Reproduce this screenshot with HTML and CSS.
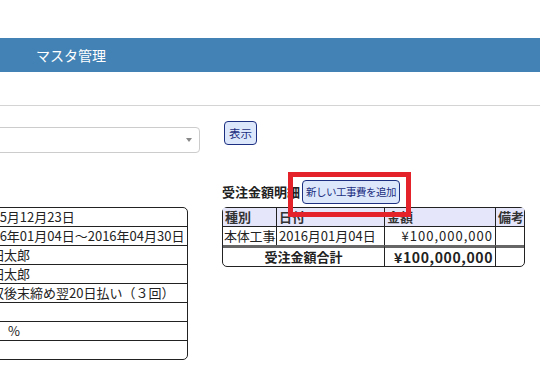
FILE: index.html
```html
<!DOCTYPE html>
<html lang="ja">
<head>
  <meta charset="UTF-8">
  <meta name="viewport" content="width=device-width, initial-scale=1.0">
  <title>マスタ管理</title>
  <link rel="stylesheet" href="styles.css">
</head>
<body>
  <header class="title-bar">マスタ管理</header>
  <div class="rule"></div>

  <main class="page">
    <div class="search-row">
      <div class="select"><span class="select-arrow"></span></div>
      <button class="btn">表示</button>
    </div>

    <div class="detail-row">
      <section class="left-col">
        <h3 class="section-title">契約情報</h3>
        <table class="info">
          <tr><th>契約日</th><td>2015月12月23日</td></tr>
          <tr><th>工期</th><td>2016年01月04日～2016年04月30日</td></tr>
          <tr><th>営業担当</th><td>山田太郎</td></tr>
          <tr><th>工事担当</th><td>山田太郎</td></tr>
          <tr><th>支払条件</th><td>検収後末締め翌20日払い（３回）</td></tr>
          <tr><th>備考</th><td></td></tr>
          <tr><th>利益率</th><td><span class="pct-val"></span>%</td></tr>
          <tr><th>状態</th><td></td></tr>
        </table>
      </section>

      <section class="right-col">
        <div class="right-head">
          <h3 class="section-title">受注金額明細</h3>
          <button class="btn btn-add">新しい工事費を追加</button>
          <div class="highlight"></div>
        </div>
        <table class="amounts">
          <tr>
            <th class="c-kind">種別</th>
            <th class="c-date">日付</th>
            <th class="c-amount">金額</th>
            <th class="c-note">備考</th>
          </tr>
          <tr>
            <td class="kind">本体工事</td>
            <td>2016月01月04日</td>
            <td class="money">¥100,000,000</td>
            <td></td>
          </tr>
          <tr class="total">
            <td colspan="2" class="total-label">受注金額合計</td>
            <td class="money">¥100,000,000</td>
            <td></td>
          </tr>
        </table>
      </section>
    </div>
  </main>
</body>
</html>
```

FILE: styles.css
```css
body {
  margin: 0;
  font-family: "Noto Sans CJK JP", sans-serif;
  font-size: 13px;
  color: #222;
  overflow: hidden;
}
.title-bar {
  margin-top: 38px;
  height: 34px;
  line-height: 34px;
  padding-left: 36px;
  background: #4382b4;
  color: #fff;
  font-size: 14px;
}
.rule {
  margin-top: 33px;
  border-top: 1px solid #d4d4d4;
}
.page {
  margin-left: -170px;
  padding-top: 15px;
}
.search-row {
  display: flex;
  align-items: flex-start;
  gap: 24px;
}
.select {
  width: 370px;
  height: 26px;
  margin-top: 6px;
  box-sizing: border-box;
  border: 1px solid #ccc;
  border-radius: 4px;
  display: flex;
  align-items: center;
  justify-content: flex-end;
  padding-right: 7px;
}
.select-arrow {
  width: 0;
  height: 0;
  border-left: 3px solid transparent;
  border-right: 3px solid transparent;
  border-top: 4px solid #888;
}
.btn {
  height: 24px;
  padding: 0 4px;
  font-family: "Noto Sans CJK JP", sans-serif;
  font-size: 11.5px;
  line-height: 22px;
  color: #1c2f80;
  background: #dde7fc;
  border: 1px solid #1c2f80;
  border-radius: 4px;
}
.btn-add {
  width: 98px;
  padding: 0 3px;
  font-size: 10.5px;
  letter-spacing: -0.5px;
}
.detail-row {
  display: flex;
  align-items: flex-start;
  gap: 22px;
  margin-top: 27px;
}
.left-col {
  width: 370px;
}
.section-title {
  margin: 0 0 3px;
  font-size: 13px;
  font-weight: bold;
  line-height: 24px;
}
.right-head {
  position: relative;
  display: flex;
  align-items: center;
  gap: 2px;
  height: 24px;
  margin-bottom: 3px;
}
.right-head .section-title {
  margin: 0;
}
.highlight {
  position: absolute;
  left: 66px;
  top: -8px;
  width: 123px;
  height: 45px;
  box-sizing: border-box;
  border: 5px solid #e3222a;
}

table {
  border-collapse: separate;
  border-spacing: 0;
  border: 1px solid #222;
  border-radius: 5px;
}
th, td {
  height: 18px;
  padding: 0 2px;
  line-height: 18px;
  white-space: nowrap;
  text-align: left;
}
tr + tr th, tr + tr td {
  border-top: 1px solid #222;
}
th + th, th + td, td + td {
  border-left: 1px solid #222;
}

.info {
  width: 358px;
}
.info th {
  width: 140px;
  background: #e6e6fa;
}
.pct-val {
  display: inline-block;
  width: 30px;
}

.amounts {
  width: 303px;
  table-layout: fixed;
}
.amounts th {
  background: #e6e6fa;
  color: #333;
}
.amounts .kind {
  padding: 0 0 0 1px;
  letter-spacing: -0.2px;
}
.c-kind { width: 49px; }
.c-date { width: 103px; }
.c-amount { width: 106px; }
.c-note { width: 24px; }
.money {
  text-align: right;
  letter-spacing: 1px;
}
.amounts tr.total td {
  border-top: 3px solid #666;
  font-weight: bold;
}
.total-label {
  text-align: center;
}
.total .money {
  font-size: 14px;
  letter-spacing: 0.6px;
}
```
